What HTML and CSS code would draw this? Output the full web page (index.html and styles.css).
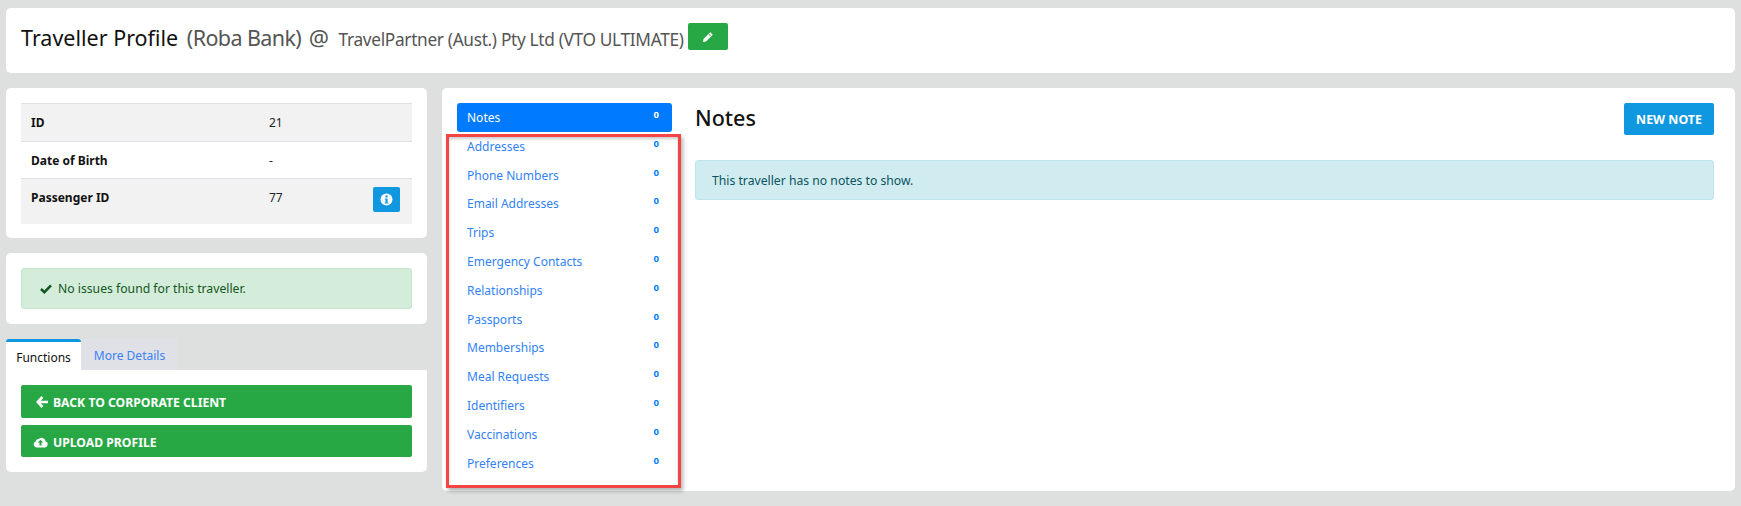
FILE: index.html
```html
<!DOCTYPE html>
<html lang="en">
<head>
  <meta charset="UTF-8">
  <title>Traveller Profile</title>
  <link rel="stylesheet" href="styles.css">
</head>
<body>
  <div class="card page-header">
    <h1>Traveller Profile <small class="name">(Roba Bank)</small> <small class="at">@</small> <small class="company">TravelPartner (Aust.) Pty Ltd (VTO ULTIMATE)</small></h1>
    <a href="#" class="btn btn-edit">
      <svg width="12" height="12" viewBox="0 0 12 12"><path fill="#fff" d="M8.3 1.2 10.8 3.7 4 10.5 .9 11.1 1.5 8Z"/><path fill="#28a745" d="M7.3 3 8.9 4.6 8.3 5.2 6.7 3.6Z"/></svg>
    </a>
  </div>

  <div class="columns">
    <div class="sidebar">
      <div class="card info-card">
        <table class="info-table">
          <tr class="odd"><th>ID</th><td>21</td><td></td></tr>
          <tr><th>Date of Birth</th><td>-</td><td></td></tr>
          <tr class="odd last">
            <th>Passenger ID</th><td>77</td>
            <td class="info-action">
              <a href="#" class="btn btn-info">
                <svg width="13" height="13" viewBox="0 0 13 13"><circle cx="6.5" cy="6.5" r="6" fill="#fff"/><rect x="5.4" y="2.4" width="2.2" height="2" fill="#0f98e0"/><path fill="#0f98e0" d="M4.8 5.4H7.6V9.4H8.3V10.6H4.8V9.4H5.5V6.6H4.8Z"/></svg>
              </a>
            </td>
          </tr>
        </table>
      </div>

      <div class="card status-card">
        <div class="alert alert-success">
          <svg width="12" height="10" viewBox="0 0 12 10"><path fill="none" stroke="#155724" stroke-width="2.6" d="M1 5 4.4 8.2 11 1.4"/></svg>
          No issues found for this traveller.
        </div>
      </div>

      <div class="tabs">
        <a href="#" class="tab active">Functions</a>
        <a href="#" class="tab">More Details</a>
      </div>
      <div class="card tab-body">
        <a href="#" class="btn btn-green tall">
          <svg width="12" height="12" viewBox="0 0 12 12"><path fill="none" stroke="#fff" stroke-width="2.6" d="M6.4 1 1.8 6 6.4 11M2 6H12"/></svg>
          Back to Corporate Client
        </a>
        <a href="#" class="btn btn-green">
          <svg width="15" height="12" viewBox="0 0 15 12"><path fill="#fff" d="M3.4 11.4A3 3 0 0 1 2.6 5.6 3 3 0 0 1 5.8 3 4 4 0 0 1 12.6 5.2 3.2 3.2 0 0 1 12 11.4Z"/><path fill="#28a745" d="M7.5 3.8 10.2 6.6H8.5V9.6H6.5V6.6H4.8Z"/></svg>
          Upload Profile
        </a>
      </div>
    </div>

    <div class="card main-card">
      <ul class="side-nav">
        <li class="active"><a href="#">Notes</a><span class="count">0</span></li>
        <li><a href="#">Addresses</a><span class="count">0</span></li>
        <li><a href="#">Phone Numbers</a><span class="count">0</span></li>
        <li><a href="#">Email Addresses</a><span class="count">0</span></li>
        <li><a href="#">Trips</a><span class="count">0</span></li>
        <li><a href="#">Emergency Contacts</a><span class="count">0</span></li>
        <li><a href="#">Relationships</a><span class="count">0</span></li>
        <li><a href="#">Passports</a><span class="count">0</span></li>
        <li><a href="#">Memberships</a><span class="count">0</span></li>
        <li><a href="#">Meal Requests</a><span class="count">0</span></li>
        <li><a href="#">Identifiers</a><span class="count">0</span></li>
        <li><a href="#">Vaccinations</a><span class="count">0</span></li>
        <li><a href="#">Preferences</a><span class="count">0</span></li>
      </ul>
      <div class="notes">
        <div class="notes-head">
          <h2>Notes</h2>
          <a href="#" class="btn btn-blue">New Note</a>
        </div>
        <div class="alert alert-info">This traveller has no notes to show.</div>
      </div>
      <div class="highlight-box"></div>
    </div>
  </div>
</body>
</html>
```

FILE: styles.css
```css
* {
  box-sizing: border-box;
  margin: 0;
  padding: 0;
}
body {
  font-family: "Noto Sans", "Open Sans", sans-serif;
  font-size: 12px;
  background-color: #dee0e0;
  color: #212529;
  padding: 8px 6px;
}
a {
  text-decoration: none;
}
.card {
  background: #fff;
  border-radius: 5px;
}
.page-header {
  height: 65px;
  padding: 15px 15px 0;
  display: flex;
  align-items: flex-start;
  gap: 4px;
}
.page-header h1 {
  font-size: 21.5px;
  font-weight: 400;
  line-height: 30px;
  color: #111;
}
.page-header small {
  color: #555;
}
.name {
  font-size: 21.5px;
  letter-spacing: -0.6px;
  margin-left: 3px;
}
.at {
  font-size: 22.5px;
  margin: 0 1px 0 2px;
}
.company {
  font-size: 17.3px;
  letter-spacing: -0.33px;
  margin-left: 3px;
}
.btn {
  display: flex;
  align-items: center;
  justify-content: center;
  border-radius: 2px;
  color: #fff;
}
.btn-edit {
  width: 40px;
  height: 27px;
  background: #28a745;
}
.columns {
  display: flex;
  gap: 15px;
  margin-top: 15px;
}
.sidebar {
  width: 421px;
  flex: none;
}
.info-card {
  height: 150px;
  padding: 15px 15px 0;
}
.info-table {
  width: 100%;
  border-collapse: collapse;
  font-size: 12px;
}
.info-table tr {
  height: 37.5px;
  border-top: 1px solid #dee2e6;
}
.info-table tr.last {
  height: 45px;
}
.info-table .odd {
  background: #f2f2f2;
}
.info-table th {
  width: 248px;
  padding: 10px 10px 0;
  text-align: left;
  font-weight: 700;
  color: #111;
  vertical-align: top;
}
.info-table td {
  vertical-align: top;
  padding-top: 10px;
}
.info-table .info-action {
  width: 36px;
  padding: 8px 12px 0 0;
}
.btn-info {
  width: 27px;
  height: 25px;
  background: #0f98e0;
}
.status-card {
  height: 71px;
  margin-top: 15px;
  padding: 15px;
}
.alert {
  border-radius: 3px;
  border: 1px solid;
}
.alert-success {
  height: 41px;
  padding: 0 18px;
  display: flex;
  align-items: center;
  gap: 6px;
  background: #d4edda;
  border-color: #c3e6cb;
  color: #155724;
  font-size: 12.2px;
}
.tabs {
  display: flex;
  margin-top: 15px;
  height: 31px;
}
.tab {
  width: 75px;
  background: #fff;
  border-top: 3px solid #0f98e0;
  border-radius: 3px 3px 0 0;
  color: #111;
  text-align: center;
  line-height: 32px;
}
.tab + .tab {
  width: 97px;
  background: #dfe1e6;
  border-top: 0;
  color: #3b82f6;
  line-height: 33px;
}
.tab-body {
  height: 102px;
  padding: 15px;
  border-radius: 0 0 5px 5px;
}
.btn-green {
  height: 32px;
  justify-content: flex-start;
  padding: 2px 0 0 12px;
  gap: 5px;
  background: #28a745;
  font-size: 12.2px;
  font-weight: 700;
  text-transform: uppercase;
}
.btn-green.tall {
  height: 33px;
  padding: 1px 0 0 15px;
  margin-bottom: 7px;
}
.main-card {
  flex: 1;
  height: 403px;
  padding: 15px 21px 0 15px;
  display: flex;
  gap: 23px;
  position: relative;
}
.side-nav {
  width: 215px;
  flex: none;
  list-style: none;
}
.side-nav li {
  height: 28.8px;
  padding: 0 13px 0 10px;
  display: flex;
  justify-content: space-between;
  line-height: 30px;
}
.side-nav a {
  color: #3282f6;
}
.side-nav .count {
  font-size: 9.5px;
  font-weight: 700;
  color: #007bff;
  line-height: 24px;
}
.side-nav .active {
  background: #007bff;
  border-radius: 3px;
}
.side-nav .active a,
.side-nav .active .count {
  color: #fff;
}
.notes {
  flex: 1;
}
.notes-head {
  display: flex;
  justify-content: space-between;
  align-items: flex-start;
  margin-bottom: 25px;
}
.notes-head h2 {
  font-size: 21.5px;
  font-weight: 500;
  line-height: 30px;
  color: #111;
}
.btn-blue {
  width: 90px;
  height: 32px;
  background: #0f98e0;
  font-size: 12.4px;
  font-weight: 700;
  text-transform: uppercase;
}
.alert-info {
  height: 40px;
  line-height: 40px;
  padding-left: 16px;
  background: #d1ecf1;
  border-color: #bee5eb;
  color: #0c5460;
  font-size: 12.2px;
}
.highlight-box {
  position: absolute;
  left: 4px;
  top: 46px;
  width: 235px;
  height: 354px;
  border: 3px solid #f44444;
  box-shadow: 2px 3px 4px rgba(0, 0, 0, 0.3), inset 0 2px 3px rgba(0, 0, 0, 0.2);
}
```
